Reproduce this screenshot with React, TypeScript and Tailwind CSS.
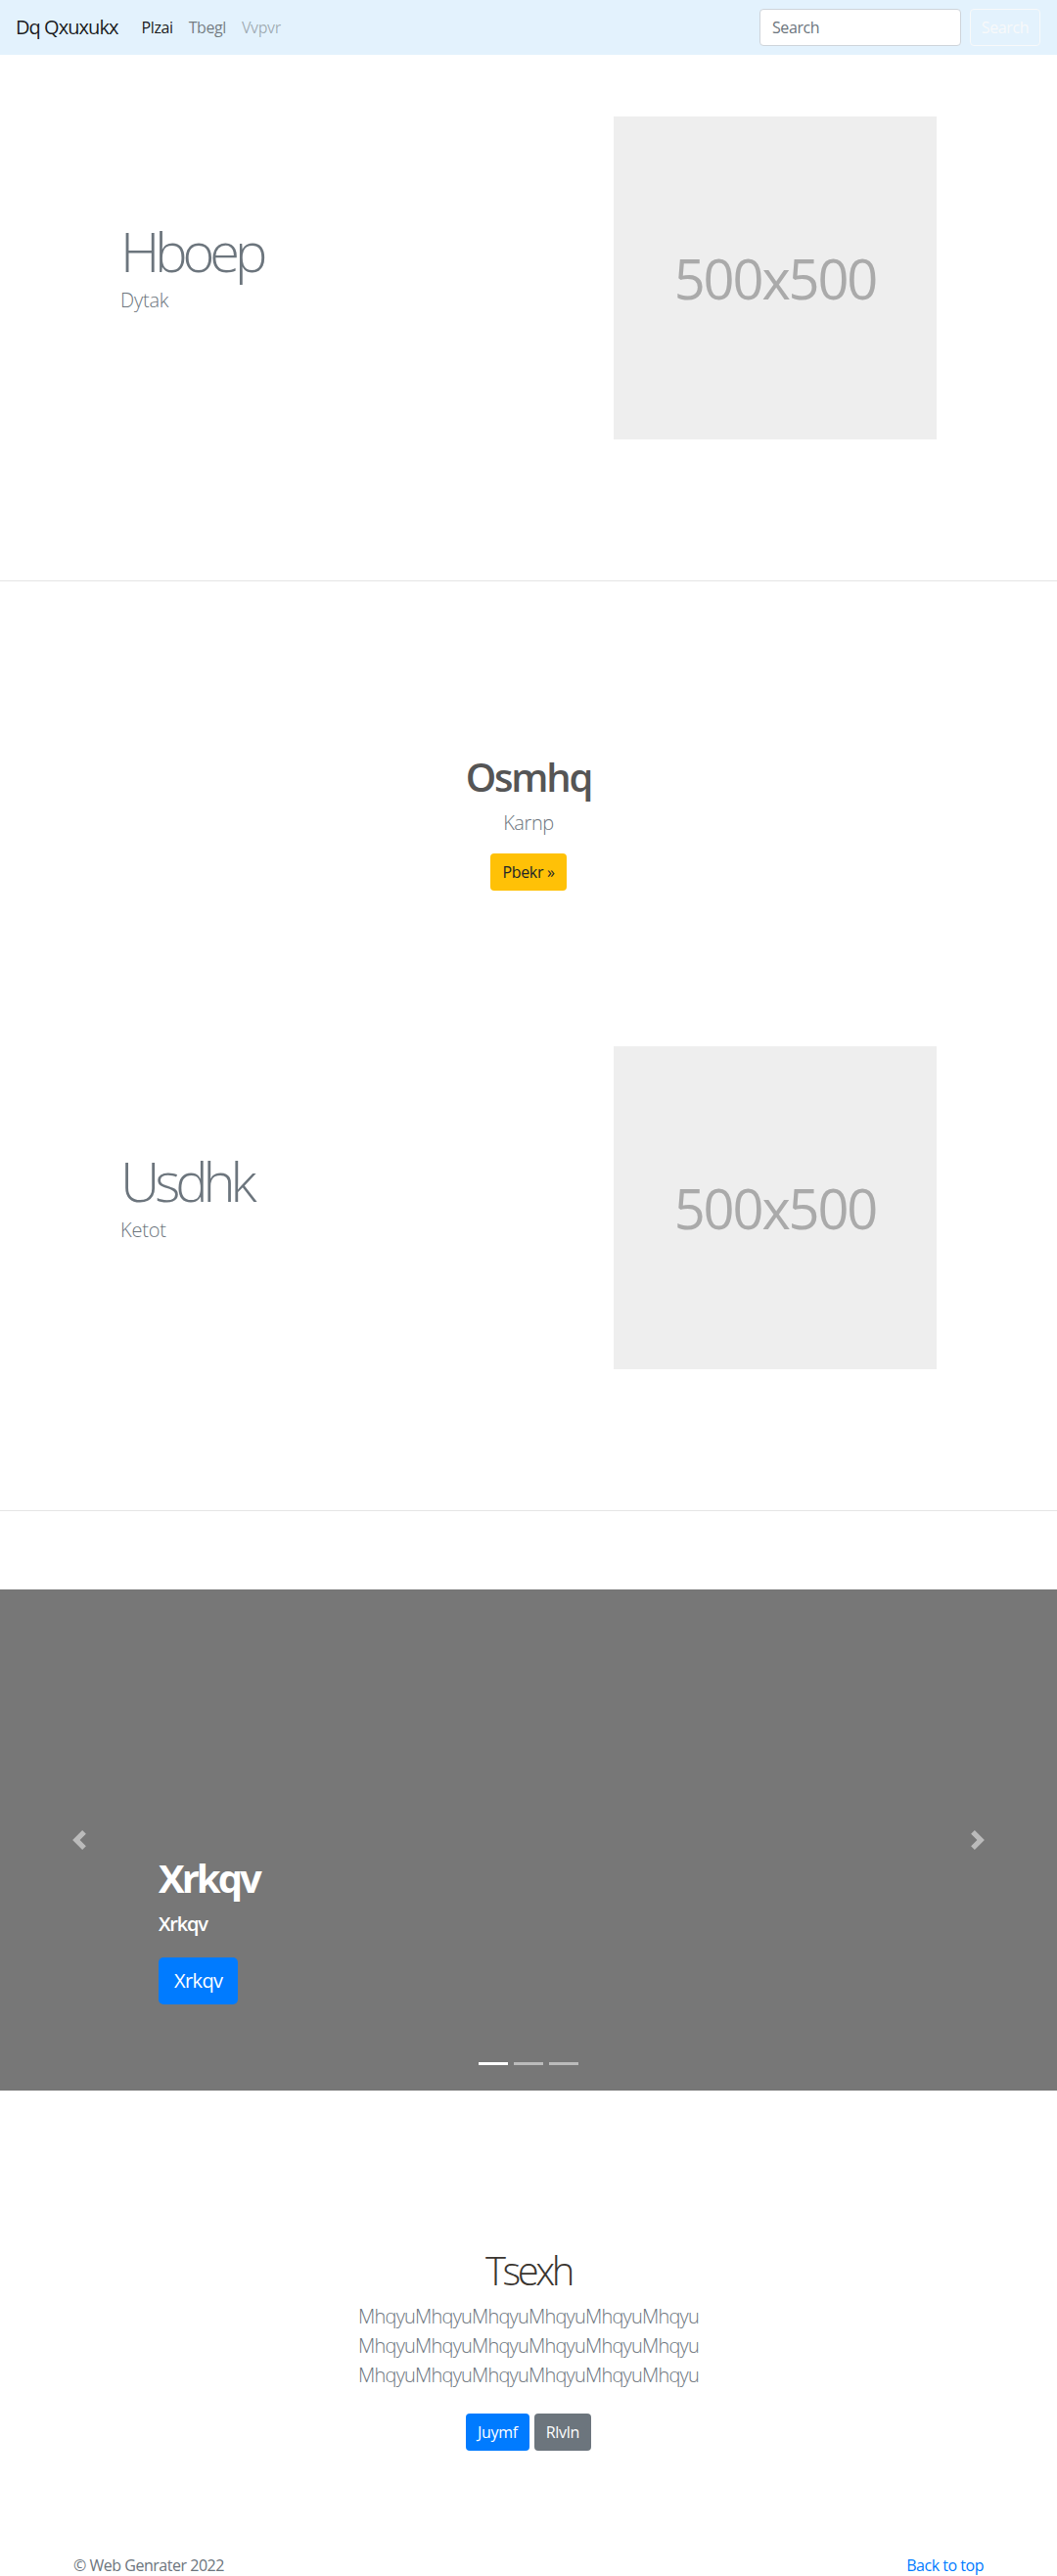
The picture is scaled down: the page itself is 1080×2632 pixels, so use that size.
import React from "react";

function Placeholder() {
  return (
    <div className="w-[330px] h-[330px] bg-[#eeeeee] flex items-center justify-center">
      <span className="text-[56px] text-[#aaaaaa] leading-none tracking-[-0.038em]">500x500</span>
    </div>
  );
}

function Feature({ title, sub }: { title: string; sub: string }) {
  return (
    <section className="w-[930px] mx-auto flex items-center pt-[63px] pb-[144px]">
      <div className="w-1/2 pl-[48px]">
        <h1 className="text-[56px] font-light leading-[1.2] text-[#6c757d] mb-[1px] tracking-[-0.09em]">{title}</h1>
        <p className="text-[20px] font-light leading-[1.5] text-[#6c757d] mb-[23px] tracking-[-0.01em]">{sub}</p>
      </div>
      <div className="w-1/2 flex justify-end pr-[48px]">
        <Placeholder />
      </div>
    </section>
  );
}

export default function App() {
  const line = "MhqyuMhqyuMhqyuMhqyuMhqyuMhqyu";
  return (
    <div className="bg-white text-[#212529] font-['Open_Sans',sans-serif] text-[16px] leading-[1.5]">
      {/* Navbar */}
      <nav className="h-14 bg-[#e3f2fd] flex items-center pl-4 pr-[17px]">
        <span className="text-[20px] text-[rgba(0,0,0,0.9)] mr-4 tracking-[-0.047em]">Dq Qxuxukx</span>
        <a className="px-2 text-[rgba(0,0,0,0.9)] tracking-[-0.025em]">Plzai</a>
        <a className="px-2 text-[rgba(0,0,0,0.5)] tracking-[-0.025em]">Tbegl</a>
        <a className="px-2 text-[rgba(0,0,0,0.3)] tracking-[-0.025em]">Vvpvr</a>
        <div className="ml-auto flex items-center">
          <input
            placeholder="Search"
            className="w-[206px] h-[38px] mr-[9px] px-3 bg-white border border-[#ced4da] rounded text-[16px] tracking-[-0.025em] placeholder:text-[#6c757d] outline-none"
          />
          <button className="w-[72px] h-[38px] border border-[#f8f9fa] rounded text-[#f8f9fa] text-[16px] tracking-[-0.025em]">
            Search
          </button>
        </div>
      </nav>

      <Feature title="Hboep" sub="Dytak" />
      <div className="border-t border-[#e5e5e5]" />

      {/* Center section */}
      <section className="pt-[176px] pb-[96px] flex flex-col items-center text-center">
        <h1 className="text-[40px] font-semibold leading-[1.2] text-[#555555] tracking-[-0.055em]">Osmhq</h1>
        <p className="mt-2 text-[20px] font-light leading-[1.5] text-[#6c757d] tracking-[-0.02em]">Karnp</p>
        <button className="mt-4 h-[38px] px-3 rounded bg-[#ffc107] text-[#212529] text-[16px] tracking-[-0.02em]">
          Pbekr »
        </button>
      </section>

      <Feature title="Usdhk" sub="Ketot" />
      <div className="border-t border-[#e5e5e5]" />

      {/* Carousel */}
      <div className="mt-[80px] relative h-[512px] bg-[#777777] overflow-hidden">
        <div className="absolute left-0 top-0 bottom-0 w-[15%] flex items-center justify-center opacity-50">
          <svg width="20" height="20" viewBox="0 0 8 8" fill="#ffffff">
            <path d="M5.25 0l-4 4 4 4 1.5-1.5L4.25 4l2.5-2.5L5.25 0z" />
          </svg>
        </div>
        <div className="absolute right-0 top-0 bottom-0 w-[15%] flex items-center justify-center opacity-50">
          <svg width="20" height="20" viewBox="0 0 8 8" fill="#ffffff">
            <path d="M2.75 0l-1.5 1.5L3.75 4l-2.5 2.5L2.75 8l4-4-4-4z" />
          </svg>
        </div>
        <div className="absolute left-[162px] top-[271px] flex flex-col items-start text-white">
          <h1 className="text-[40px] font-bold leading-[1.2] tracking-[-0.075em]">Xrkqv</h1>
          <p className="mt-2 text-[20px] font-semibold leading-[1.5] tracking-[-0.06em]">Xrkqv</p>
          <button className="mt-[19px] h-[48px] px-4 rounded-[5px] bg-[#007bff] text-white text-[20px] tracking-[-0.03em]">
            Xrkqv
          </button>
        </div>
        <div className="absolute bottom-[26px] left-0 right-0 flex justify-center gap-[6px]">
          <span className="w-[30px] h-[3px] bg-white" />
          <span className="w-[30px] h-[3px] bg-white/50" />
          <span className="w-[30px] h-[3px] bg-white/50" />
        </div>
      </div>

      {/* Album heading */}
      <section className="pt-[160px] flex flex-col items-center text-center">
        <h1 className="text-[40px] font-light leading-[1.2] text-[#3a3530] tracking-[-0.085em]">Tsexh</h1>
        <p className="mt-2 text-[20px] font-light leading-[1.5] text-[#6c757d] tracking-[-0.04em]">
          {line}
          <br />
          {line}
          <br />
          {line}
        </p>
        <div className="mt-6 flex gap-[5px]">
          <button className="h-[38px] px-3 rounded bg-[#007bff] text-white text-[16px] tracking-[-0.02em]">Juymf</button>
          <button className="h-[38px] px-3 rounded bg-[#6c757d] text-white text-[16px] tracking-[-0.02em]">Rlvln</button>
        </div>
      </section>

      {/* Footer */}
      <footer className="w-[930px] mx-auto mt-[105px] pb-12 flex justify-between text-[16px] tracking-[-0.03em]">
        <span className="text-[#6c757d]">© Web Genrater 2022</span>
        <a className="text-[#007bff]">Back to top</a>
      </footer>
    </div>
  );
}
